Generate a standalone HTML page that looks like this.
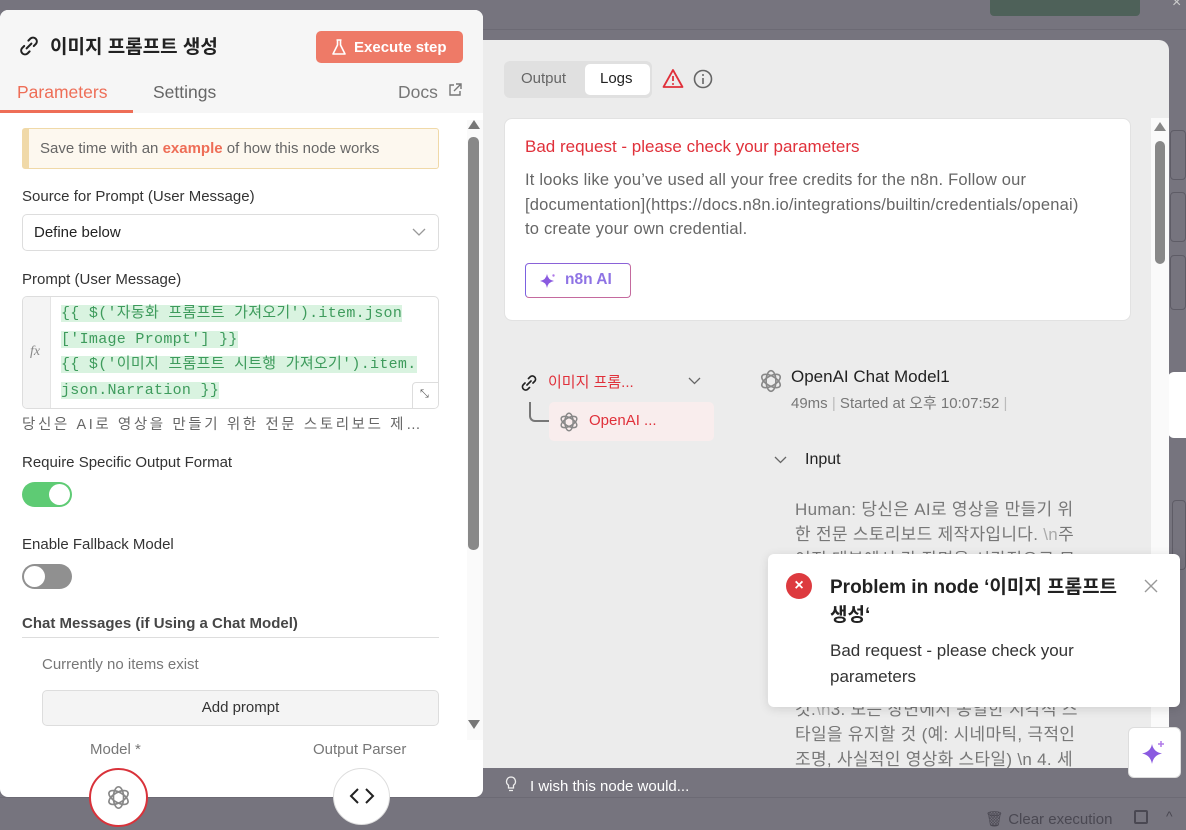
<!DOCTYPE html>
<html><head><meta charset="utf-8">
<style>
*{box-sizing:border-box;margin:0;padding:0}
body{width:1186px;height:830px;overflow:hidden;background:#76747e;font-family:"Liberation Sans","Noto Sans CJK KR",sans-serif;position:relative;color:#333}
.abs{position:absolute}
.mono{font-family:"Liberation Mono","Noto Sans CJK KR",monospace}
</style></head><body>
<div class="abs" style="left:990px;top:0;width:150px;height:16px;background:#4e6159;border-radius:0 0 4px 4px"></div>
<div class="abs" style="left:0;top:29px;width:1186px;height:1px;background:#6c6a74"></div>
<div class="abs" style="left:1172px;top:-6px;color:#ccc;font-size:16px">×</div>
<div class="abs" style="left:1170px;top:130px;width:16px;height:50px;border:1px solid #5e5c66;border-radius:4px"></div>
<div class="abs" style="left:1170px;top:192px;width:16px;height:50px;border:1px solid #5e5c66;border-radius:4px"></div>
<div class="abs" style="left:1170px;top:255px;width:16px;height:55px;border:1px solid #5e5c66;border-radius:4px"></div>
<div class="abs" style="left:1168px;top:372px;width:18px;height:66px;background:#fff;border-radius:6px 0 0 6px"></div>
<div class="abs" style="left:1172px;top:500px;width:14px;height:70px;border:1px solid #5e5c66;border-radius:4px"></div>

<div class="abs" style="left:470px;top:40px;width:699px;height:728px;background:#ececec;border-radius:0 10px 0 0"></div>
<div class="abs" style="left:504px;top:61px;width:148px;height:37px;background:#e0e0e0;border-radius:6px"></div>
<div class="abs" style="left:521px;top:70px;font-size:15px;color:#666">Output</div>
<div class="abs" style="left:585px;top:64px;width:65px;height:31px;background:#fff;border-radius:5px"></div>
<div class="abs" style="left:600px;top:70px;font-size:15px;color:#222">Logs</div>
<svg class="abs" style="left:662px;top:68px" width="22" height="21" viewBox="0 0 22 21"><path d="M11 2L20.5 19H1.5Z" fill="none" stroke="#e0303a" stroke-width="1.8" stroke-linejoin="round"/><path d="M11 8v5" stroke="#e0303a" stroke-width="1.8"/><circle cx="11" cy="16" r="1" fill="#e0303a"/></svg>
<svg class="abs" style="left:692px;top:68px" width="22" height="22" viewBox="0 0 22 22"><circle cx="11" cy="11" r="8.5" fill="none" stroke="#666" stroke-width="1.6"/><path d="M11 10v6" stroke="#666" stroke-width="1.6"/><circle cx="11" cy="7" r="1" fill="#666"/></svg>

<div class="abs" style="left:504px;top:118px;width:627px;height:203px;background:#fff;border:1px solid #e2e2e2;border-radius:8px"></div>
<div class="abs" style="left:525px;top:137px;font-size:17px;color:#e0303a">Bad request - please check your parameters</div>
<div class="abs" style="left:525px;top:168px;width:600px;font-size:16.5px;line-height:24.5px;color:#666;white-space:nowrap;letter-spacing:0.2px">It looks like you’ve used all your free credits for the n8n. Follow our<br>[documentation](https://docs.n8n.io/integrations/builtin/credentials/openai)<br>to create your own credential.</div>
<div class="abs" style="left:525px;top:263px;width:106px;height:35px;border:1px solid #c46a9e;border-left-color:#7b61e0;border-top-color:#8a62d8;border-radius:4px"></div>
<svg class="abs" style="left:539px;top:272px" width="18" height="18" viewBox="0 0 18 18"><path d="M8 2Q9 8 15 9Q9 10 8 16Q7 10 1 9Q7 8 8 2Z" fill="#8a5ae0"/><circle cx="14.5" cy="3.5" r="1.2" fill="#b07ae8"/></svg>
<div class="abs" style="left:565px;top:271px;font-size:15.5px;color:#7b5be0;font-weight:bold;opacity:.85">n8n AI</div>

<svg class="abs" style="left:519px;top:373px" width="20" height="20" viewBox="0 0 20 20"><path d="M8 12l4-4M9.5 5.5l1.8-1.8a3.2 3.2 0 014.5 4.5L14 10M10.5 14.5l-1.8 1.8a3.2 3.2 0 01-4.5-4.5L6 10" fill="none" stroke="#222" stroke-width="1.7" stroke-linecap="round"/></svg>
<div class="abs" style="left:548px;top:371px;font-size:15px;color:#e0303a">이미지 프롬...</div>
<svg class="abs" style="left:688px;top:377px" width="13" height="8" viewBox="0 0 13 8"><path d="M1 1l5.5 5.5L12 1" fill="none" stroke="#666" stroke-width="1.3"/></svg>
<div class="abs" style="left:529px;top:402px;width:20px;height:20px;border-left:2px solid #777;border-bottom:2px solid #777;border-radius:0 0 0 6px"></div>
<div class="abs" style="left:549px;top:402px;width:165px;height:39px;background:#f9eded;border-radius:5px"></div>
<svg class="abs" style="left:558px;top:411px" width="22" height="22" viewBox="0 0 24 24"><g fill="none" stroke="#888" stroke-width="1.6"><ellipse cx="12" cy="12" rx="4.5" ry="9.5"/><ellipse cx="12" cy="12" rx="4.5" ry="9.5" transform="rotate(60 12 12)"/><ellipse cx="12" cy="12" rx="4.5" ry="9.5" transform="rotate(120 12 12)"/></g></svg>
<div class="abs" style="left:589px;top:412px;font-size:15px;color:#e0303a">OpenAI ...</div>

<svg class="abs" style="left:758px;top:368px" width="26" height="26" viewBox="0 0 24 24"><g fill="none" stroke="#888" stroke-width="1.5"><ellipse cx="12" cy="12" rx="4.5" ry="9.5"/><ellipse cx="12" cy="12" rx="4.5" ry="9.5" transform="rotate(60 12 12)"/><ellipse cx="12" cy="12" rx="4.5" ry="9.5" transform="rotate(120 12 12)"/></g></svg>
<div class="abs" style="left:791px;top:367px;font-size:17px;color:#222">OpenAI Chat Model1</div>
<div class="abs" style="left:791px;top:392px;font-size:15px;color:#777">49ms <span style="color:#bbb">|</span> Started at 오후 10:07:52 <span style="color:#bbb">|</span></div>
<svg class="abs" style="left:774px;top:456px" width="13" height="8" viewBox="0 0 13 8"><path d="M1 1l5.5 5.5L12 1" fill="none" stroke="#666" stroke-width="1.3"/></svg>
<div class="abs" style="left:805px;top:451px;font-size:16px;color:#222">Input</div>
<div class="abs" style="left:795px;top:497px;font-size:17px;line-height:25px;color:#777;white-space:nowrap;letter-spacing:0.3px">Human: 당신은 AI로 영상을 만들기 위<br>한 전문 스토리보드 제작자입니다. <span style="color:#aaa">\n</span>주<br>어진 대본에서 각 장면을 시각적으로 묘<br>&nbsp;<br>&nbsp;<br>&nbsp;<br>&nbsp;<br>&nbsp;<br>것.<span style="color:#aaa">\n</span>3. 모든 장면에서 동일한 시각적 스<br>타일을 유지할 것 (예: 시네마틱, 극적인<br>조명, 사실적인 영상화 스타일) \n 4. 세</div>
<div class="abs" style="left:1151px;top:118px;width:18px;height:650px;background:#fafafa"></div>
<div class="abs" style="left:1154px;top:122px;width:0;height:0;border-left:6px solid transparent;border-right:6px solid transparent;border-bottom:9px solid #888"></div>
<div class="abs" style="left:1155px;top:141px;width:10px;height:123px;background:#888;border-radius:5px"></div>

<div class="abs" style="left:483px;top:768px;width:703px;height:29px;background:#76747e"></div>
<div class="abs" style="left:0;top:797px;width:1186px;height:1px;background:#6c6a74"></div>
<svg class="abs" style="left:505px;top:776px" width="12" height="18" viewBox="0 0 12 18"><path d="M6 1a4.5 4.5 0 00-2.5 8.2V12h5V9.2A4.5 4.5 0 006 1zM4 14.5h4" fill="none" stroke="#eee" stroke-width="1.3"/></svg>
<div class="abs" style="left:530px;top:778px;font-size:15px;color:#fff">I wish this node would...</div>
<div class="abs" style="left:985px;top:810px;font-size:15px;color:#4a4852">🗑 Clear execution</div>
<div class="abs" style="left:1134px;top:810px;width:14px;height:14px;border:2px solid #4a4852;border-radius:2px"></div>
<div class="abs" style="left:1166px;top:808px;font-size:14px;color:#4a4852">^</div>

<div class="abs" style="left:1128px;top:727px;width:53px;height:51px;background:#fff;border:1px solid #ddd;border-radius:6px"></div>
<svg class="abs" style="left:1141px;top:740px" width="26" height="26" viewBox="0 0 26 26"><path d="M11 4Q12.5 12 21 13.5Q12.5 15 11 24Q9.5 15 1 13.5Q9.5 12 11 4Z" fill="#8a5ae0"/><path d="M20 1v6M17 4h6" stroke="#b07ae8" stroke-width="1.5"/></svg>

<div class="abs" style="left:768px;top:554px;width:412px;height:153px;background:#fff;border-radius:6px;box-shadow:0 2px 10px rgba(0,0,0,.12)"></div>
<div class="abs" style="left:786px;top:573px;width:26px;height:26px;border-radius:50%;background:#dd3a3f;color:#fff;font-size:16px;font-weight:bold;text-align:center;line-height:26px">×</div>
<div class="abs" style="left:830px;top:574px;font-size:19px;line-height:28px;font-weight:bold;color:#222;white-space:nowrap">Problem in node ‘이미지 프롬프트<br>생성‘</div>
<svg class="abs" style="left:1144px;top:579px" width="14" height="14" viewBox="0 0 14 14"><path d="M1 1l12 12M13 1L1 13" stroke="#999" stroke-width="1.4"/></svg>
<div class="abs" style="left:830px;top:638px;width:300px;font-size:17px;line-height:26px;color:#333">Bad request - please check your parameters</div>

<div class="abs" style="left:0;top:10px;width:483px;height:787px;background:#fff;border-radius:8px;overflow:hidden">
  <div class="abs" style="left:0;top:0;width:483px;height:103px;background:#f6f6f6"></div>
  <svg class="abs" style="left:17px;top:24px" width="24" height="24" viewBox="0 0 20 20"><path d="M8 12l4-4M9.5 5.5l1.8-1.8a3.2 3.2 0 014.5 4.5L14 10M10.5 14.5l-1.8 1.8a3.2 3.2 0 01-4.5-4.5L6 10" fill="none" stroke="#222" stroke-width="1.7" stroke-linecap="round"/></svg>
  <div class="abs" style="left:50px;top:22px;font-size:19px;font-weight:bold;color:#222">이미지 프롬프트 생성</div>
  <div class="abs" style="left:316px;top:21px;width:147px;height:32px;background:#ee7a67;border-radius:5px"></div>
  <svg class="abs" style="left:331px;top:28px" width="16" height="18" viewBox="0 0 16 18"><path d="M5.5 2h5M6.5 2v5L2 16h12L9.5 7V2" fill="none" stroke="#fff" stroke-width="1.6" stroke-linejoin="round"/></svg>
  <div class="abs" style="left:354px;top:29px;font-size:15px;font-weight:bold;color:#fff">Execute step</div>
  <div class="abs" style="left:17px;top:72px;font-size:17.5px;color:#ee6e57">Parameters</div>
  <div class="abs" style="left:0;top:100px;width:133px;height:3px;background:#ee6e57"></div>
  <div class="abs" style="left:153px;top:72px;font-size:17.5px;color:#666">Settings</div>
  <div class="abs" style="left:398px;top:72px;font-size:17.5px;color:#777">Docs</div>
  <svg class="abs" style="left:448px;top:73px" width="14" height="14" viewBox="0 0 14 14"><path d="M6 2H2v10h10V8M8 1h5v5M13 1L6 8" fill="none" stroke="#777" stroke-width="1.4"/></svg>

  <div class="abs" style="left:22px;top:118px;width:417px;height:41px;background:#fdf8ef;border:1px solid #f0d9a8;border-left:7px solid #f0d9a8;border-radius:3px"></div>
  <div class="abs" style="left:40px;top:130px;font-size:15px;color:#666">Save time with an <b style="color:#ee6e57">example</b> of how this node works</div>

  <div class="abs" style="left:22px;top:178px;font-size:15px;color:#333">Source for Prompt (User Message)</div>
  <div class="abs" style="left:22px;top:204px;width:417px;height:37px;border:1px solid #ddd;border-radius:5px"></div>
  <div class="abs" style="left:34px;top:214px;font-size:15px;color:#222">Define below</div>
  <svg class="abs" style="left:412px;top:218px" width="14" height="9" viewBox="0 0 14 9"><path d="M1 1l6 6 6-6" fill="none" stroke="#999" stroke-width="1.3"/></svg>

  <div class="abs" style="left:22px;top:261px;font-size:15px;color:#333">Prompt (User Message)</div>
  <div class="abs" style="left:22px;top:286px;width:417px;height:113px;border:1px solid #ddd;border-radius:5px;overflow:hidden">
    <div class="abs" style="left:0;top:0;width:28px;height:113px;background:#f4f4f4;border-right:1px solid #e4e4e4"></div>
    <div class="abs" style="left:7px;top:47px;font-family:'Liberation Serif',serif;font-style:italic;font-size:14px;color:#888">fx</div>
    <div class="abs mono" style="left:38px;top:4px;width:400px;font-size:15px;line-height:25.5px;color:#3e9b5c;white-space:pre;letter-spacing:0.3px"><span style="background:#d9f3e0">{{ $('자동화 프롬프트 가져오기').item.json</span>
<span style="background:#d9f3e0">['Image Prompt'] }}</span>
<span style="background:#d9f3e0">{{ $('이미지 프롬프트 시트행 가져오기').item.</span>
<span style="background:#d9f3e0">json.Narration }}</span></div>
    <div class="abs" style="left:389px;top:85px;width:28px;height:28px;background:#fff;border:1px solid #ddd;border-radius:4px 0 0 0"></div>
    <div class="abs" style="left:397px;top:91px;font-size:11px;color:#555">⤡</div>
  </div>
  <div class="abs" style="left:22px;top:403px;font-size:14.5px;color:#666;letter-spacing:2.6px;white-space:nowrap">당신은 AI로 영상을 만들기 위한 전문 스토리보드 제…</div>

  <div class="abs" style="left:22px;top:444px;font-size:15px;color:#333">Require Specific Output Format</div>
  <div class="abs" style="left:22px;top:472px;width:50px;height:25px;border-radius:13px;background:#5ecb74"></div>
  <div class="abs" style="left:49px;top:474px;width:21px;height:21px;border-radius:50%;background:#fff"></div>
  <div class="abs" style="left:22px;top:526px;font-size:15px;color:#333">Enable Fallback Model</div>
  <div class="abs" style="left:22px;top:554px;width:50px;height:25px;border-radius:13px;background:#909090"></div>
  <div class="abs" style="left:24px;top:556px;width:21px;height:21px;border-radius:50%;background:#fff"></div>

  <div class="abs" style="left:22px;top:605px;font-size:15px;font-weight:bold;color:#333;opacity:.9">Chat Messages (if Using a Chat Model)</div>
  <div class="abs" style="left:22px;top:627px;width:417px;height:1px;background:#ddd"></div>
  <div class="abs" style="left:42px;top:646px;font-size:15px;color:#777">Currently no items exist</div>
  <div class="abs" style="left:42px;top:680px;width:397px;height:36px;background:#f4f4f4;border:1px solid #ddd;border-radius:5px"></div>
  <div class="abs" style="left:42px;top:689px;width:397px;text-align:center;font-size:15px;color:#333">Add prompt</div>

  <div class="abs" style="left:467px;top:110px;width:16px;height:620px;background:#fafafa"></div>
  <div class="abs" style="left:468px;top:110px;width:0;height:0;border-left:6px solid transparent;border-right:6px solid transparent;border-bottom:9px solid #777"></div>
  <div class="abs" style="left:468px;top:127px;width:11px;height:413px;background:#888;border-radius:5px"></div>
  <div class="abs" style="left:468px;top:710px;width:0;height:0;border-left:6px solid transparent;border-right:6px solid transparent;border-top:9px solid #777"></div>

  <div class="abs" style="left:90px;top:731px;font-size:15px;color:#777">Model *</div>
  <div class="abs" style="left:313px;top:731px;font-size:15px;color:#777">Output Parser</div>
</div>
<div class="abs" style="left:89px;top:768px;width:59px;height:59px;border-radius:50%;background:#fff;border:2px solid #d9323a"></div>
<svg class="abs" style="left:105px;top:784px" width="27" height="27" viewBox="0 0 24 24"><g fill="none" stroke="#888" stroke-width="1.5"><ellipse cx="12" cy="12" rx="4.5" ry="9.5"/><ellipse cx="12" cy="12" rx="4.5" ry="9.5" transform="rotate(60 12 12)"/><ellipse cx="12" cy="12" rx="4.5" ry="9.5" transform="rotate(120 12 12)"/></g></svg>
<div class="abs" style="left:333px;top:768px;width:57px;height:57px;border-radius:50%;background:#fff;border:1px solid #ddd"></div>
<svg class="abs" style="left:349px;top:787px" width="26" height="18" viewBox="0 0 26 18"><path d="M9 2L2 9l7 7M17 2l7 7-7 7" fill="none" stroke="#222" stroke-width="2"/></svg>
</body></html>
